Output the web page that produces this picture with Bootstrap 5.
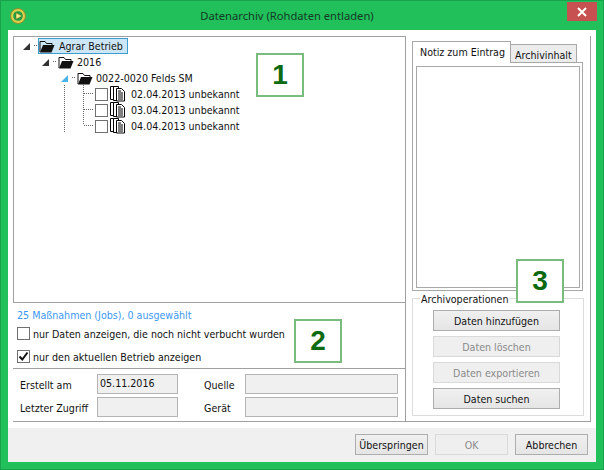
<!DOCTYPE html>
<html lang="de"><head><meta charset="utf-8"><title>Datenarchiv</title>
<link rel="stylesheet" href="https://cdn.jsdelivr.net/npm/bootstrap@5.3.0/dist/css/bootstrap.min.css">
<style>
html,body{margin:0;background:#21c05b}
body{width:604px;height:470px;overflow:hidden;font-family:"DejaVu Sans Condensed","Liberation Sans",sans-serif;font-size:10.6px;line-height:14px;color:#111}
.win{width:604px;height:470px;border:1px solid #18a24c;background:#21c05b;padding:0 7px 7px}
.tbar{height:29px;position:relative}
.tapp{position:absolute;left:2px;top:7px}
.ttitle{font-family:"Noto Sans",sans-serif;font-size:11.2px;line-height:30px;color:#123a24;padding-right:30px}
.tclose{position:absolute;right:-1px;top:1px;width:30px;height:19px;background:#c75050}
.wbody{height:432px;background:#fff}
.wmain{height:398px;padding:6px 5px 0}
.lcol{width:393px;height:386px;border-bottom:1px solid #a0a0a0}
.rcol{width:186px;height:386px;border:solid #a0a0a0;border-width:0 1px 1px 1px;padding:5px 6px 0 6px}
.treebox{height:267px;border:1px solid #a0a0a0;border-right:0;position:relative;padding-top:1px}
.trow{height:16px;white-space:nowrap}
.i0{padding-left:9px}.i1{padding-left:28px}.i2{padding-left:47px}.i3{padding-left:81px}
.tri{width:7px;height:7px;margin-right:5px;flex:none}
.sel{background:#cde6f7;outline:1px solid #3d9dd0;padding-right:4px;height:14px}
.chkb{width:13px;height:13px;border:1px solid #707070;background:#fff;flex:none}
.ftxt{margin-left:3px}
.dtxt{margin-left:5px}
.docic{margin-left:2px;flex:none}
.tlines{position:absolute;left:0;top:0}
.stat{height:66px;border-bottom:1px solid #a0a0a0;padding:5px 0 0 4px}
.stxt{color:#3b99f5;height:14px}
.opt{height:23px;gap:3px;white-space:nowrap}
.flds{padding:5px 0 0 7px;row-gap:3px}
.frow{height:20px}
.flbl{width:77px;padding-top:1px}
.flbl2{width:41px;margin-left:26px;padding-top:1px}
.fbox{height:20px;background:#f0f0f0;border:1px solid #b4b4b4;padding-left:2px;line-height:16px}
.w81{width:81px}.w153{width:153px}
.tabhead{height:21px;position:relative;z-index:1}
.tab1{width:99px;height:22px;border:1px solid #a8a8a8;border-bottom:0;background:#fff;padding:3px 0 0 7px;color:#111;white-space:nowrap}
.tab2{width:67px;height:19px;margin-top:3px;margin-left:-1px;border:1px solid #a8a8a8;background:#ececec;padding:3px 0 0 4px;white-space:nowrap}
.tabpane{height:229px;margin-top:0;border:1px solid #a8a8a8;width:171px;padding:3px 2px 3px 3px}
.tabin{height:222px;border:1px solid #a8a8a8;background:#fff}
.grp{width:172px;height:118px;margin-top:7px;border:1px solid #dcdcdc;position:relative;padding:11px 0 0 20px;row-gap:5px}
.grplbl{position:absolute;left:7px;top:-6px;background:#fff;padding:0 1px;line-height:13px}
.wbtn{width:127px;height:21px;border:1px solid #adadad;background:linear-gradient(#f0f0f0,#e5e5e5);font-size:10.6px;line-height:14px;color:#111;padding:1px 0 0;border-radius:0;flex:none}
.wbtn:disabled{background:#efefef;border-color:#d9d9d9;color:#8a8a8a;opacity:1}
.wfoot{height:34px;background:#f0f0f0;padding:6px 8px 0 0;gap:7px}
.wfoot .wbtn{width:73px}
.nbox{position:absolute;width:48px;height:44px;border:2px solid #7abb7e;background:#fff;font-family:"Liberation Sans",sans-serif;font-weight:700;font-size:28px;line-height:40px;text-align:center;color:#0d6a10;z-index:2}
.n1{left:255px;top:52px}.n2{left:293px;top:318px}.n3{left:515px;top:258px}
</style></head><body>
<div class="win position-relative">
 <div class="tbar text-center">
  <svg class="tapp" width="16" height="16" viewBox="0 0 16 16"><circle cx="8" cy="8" r="7.5" fill="#d9cf4a" stroke="#8d8f30"/><circle cx="8" cy="8" r="4.8" fill="#1f9e45"/><path d="M6 4.800L12 8 6 11.200z" fill="#f4ee8a" stroke="#6f7a20" stroke-width=".6"/></svg>
  <div class="ttitle">Datenarchiv (Rohdaten entladen)</div>
  <div class="tclose d-flex align-items-center justify-content-center"><svg width="10" height="10" viewBox="0 0 10 10"><path d="M1 1L9 9M9 1L1 9" stroke="#fff" stroke-width="2"/></svg></div>
 </div>
 <div class="wbody d-flex flex-column">
  <div class="wmain d-flex">
   <div class="lcol d-flex flex-column">
    <div class="treebox">
     <svg class="tlines" width="130" height="100"><g stroke="#666" stroke-dasharray="1 1" fill="none"><path d="M20 8.500h3M39 24.500h3M58 40.500h3M50.500 48v48M69.500 48v40M70 56.500h10M70 72.500h10M70 88.500h10"/></g></svg>
     <div class="trow i0 d-flex align-items-center"><svg class="tri" viewBox="0 0 7 7"><path d="M7 0V7H0z" fill="#333"/></svg><span class="ms-1"></span><span class="sel d-flex align-items-center"><svg width="16" height="13" viewBox="0 0 16 13"><path d="M1 12V1.500h5l1.500 2H13V5" fill="none" stroke="#111"/><path d="M1 12.500L4 5h11.500L12.500 12.500z" fill="#111"/></svg><span class="ftxt ms-1">Agrar Betrieb</span></span></div>
     <div class="trow i1 d-flex align-items-center"><svg class="tri" viewBox="0 0 7 7"><path d="M7 0V7H0z" fill="#333"/></svg><span class="ms-1"></span><svg width="16" height="13" viewBox="0 0 16 13"><path d="M1 12V1.500h5l1.500 2H13V5" fill="none" stroke="#111"/><path d="M1 12.500L4 5h11.500L12.500 12.500z" fill="#111"/></svg><span class="ftxt">2016</span></div>
     <div class="trow i2 d-flex align-items-center"><svg class="tri" viewBox="0 0 7 7"><path d="M7 0V7H0z" fill="#48b4e8"/></svg><span class="ms-1"></span><svg width="16" height="13" viewBox="0 0 16 13"><path d="M1 12V1.500h5l1.500 2H13V5" fill="none" stroke="#111"/><path d="M1 12.500L4 5h11.500L12.500 12.500z" fill="#111"/></svg><span class="ftxt">0022-0020 Felds SM</span></div>
     <div class="trow i3 d-flex align-items-center"><span class="chkb"></span><svg class="docic" width="16" height="16" viewBox="0 0 16 16"><g fill="#fff" stroke="#000"><path d="M.5.500h5v13h-5z"/><path d="M3.500.5h5v14h-5z"/><path d="M6.500 2.500h5l3 3v9.500h-8z"/></g><path d="M8 5h3M8 7h5M8 9h5M8 11h5M8 13h5" stroke="#000"/></svg><span class="dtxt">02.04.2013 unbekannt</span></div>
     <div class="trow i3 d-flex align-items-center"><span class="chkb"></span><svg class="docic" width="16" height="16" viewBox="0 0 16 16"><g fill="#fff" stroke="#000"><path d="M.5.500h5v13h-5z"/><path d="M3.500.5h5v14h-5z"/><path d="M6.500 2.500h5l3 3v9.500h-8z"/></g><path d="M8 5h3M8 7h5M8 9h5M8 11h5M8 13h5" stroke="#000"/></svg><span class="dtxt">03.04.2013 unbekannt</span></div>
     <div class="trow i3 d-flex align-items-center"><span class="chkb"></span><svg class="docic" width="16" height="16" viewBox="0 0 16 16"><g fill="#fff" stroke="#000"><path d="M.5.500h5v13h-5z"/><path d="M3.500.5h5v14h-5z"/><path d="M6.500 2.500h5l3 3v9.500h-8z"/></g><path d="M8 5h3M8 7h5M8 9h5M8 11h5M8 13h5" stroke="#000"/></svg><span class="dtxt">04.04.2013 unbekannt</span></div>
    </div>
    <div class="stat">
     <div class="stxt">25 Maßnahmen (Jobs), 0 ausgewählt</div>
     <div class="opt d-flex align-items-center"><span class="chkb"></span><span>nur Daten anzeigen, die noch nicht verbucht wurden</span></div>
     <div class="opt d-flex align-items-center"><span class="chkb d-flex"><svg width="11" height="11" viewBox="0 0 11 11"><path d="M1.500 5.500L4.300 8.500 9.500 1.500" fill="none" stroke="#111" stroke-width="2"/></svg></span><span>nur den aktuellen Betrieb anzeigen</span></div>
    </div>
    <div class="flds d-flex flex-column">
     <div class="frow d-flex align-items-center"><span class="flbl">Erstellt am</span><span class="fbox w81">05.11.2016</span><span class="flbl2">Quelle</span><span class="fbox w153"></span></div>
     <div class="frow d-flex align-items-center"><span class="flbl">Letzter Zugriff</span><span class="fbox w81"></span><span class="flbl2">Gerät</span><span class="fbox w153"></span></div>
    </div>
   </div>
   <div class="rcol">
    <div class="tabhead d-flex"><div class="tab1">Notiz zum Eintrag</div><div class="tab2">Archivinhalt</div></div>
    <div class="tabpane"><div class="tabin"></div></div>
    <div class="grp d-flex flex-column"><span class="grplbl">Archivoperationen</span>
     <button class="btn wbtn" type="button">Daten hinzufügen</button>
     <button class="btn wbtn" type="button" disabled>Daten löschen</button>
     <button class="btn wbtn" type="button" disabled>Daten exportieren</button>
     <button class="btn wbtn" type="button">Daten suchen</button>
    </div>
   </div>
  </div>
  <div class="wfoot d-flex justify-content-end">
   <button class="btn wbtn" type="button">Überspringen</button>
   <button class="btn wbtn" type="button" disabled>OK</button>
   <button class="btn wbtn" type="button">Abbrechen</button>
  </div>
 </div>
 <div class="nbox n1">1</div><div class="nbox n2">2</div><div class="nbox n3">3</div>
</div>
</body></html>
